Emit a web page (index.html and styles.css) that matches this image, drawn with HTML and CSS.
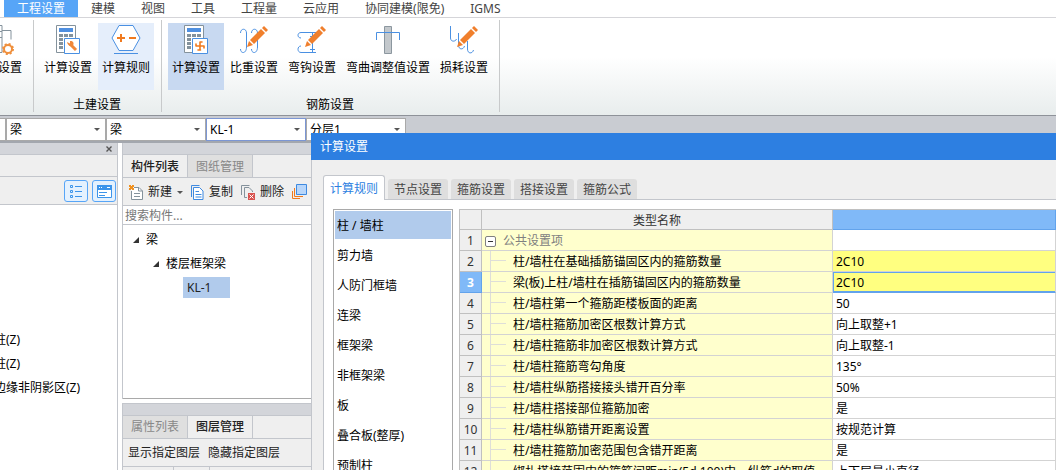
FILE: index.html
```html
<!DOCTYPE html>
<html lang="zh-CN">
<head>
<meta charset="utf-8">
<title>工程设置</title>
<link rel="stylesheet" href="styles.css">
</head>
<body>
<svg class="defs" aria-hidden="true">
  <symbol id="calc" viewBox="0 0 24 30">
    <path d="M8 27.500H.5V.5h19V13" fill="#fff" stroke="#84929c"/>
    <path d="M3 3h14v4H3z" fill="#4f8fe0"/>
    <path d="M3 9h4v3H3zM8 9h4v3H8zM13 9h4v3h-4zM3 13h4v3H3zM3 17h4v3H3zM3 21h4v3H3z" fill="#84929c"/>
    <path d="M8.500 13.500h15v15h-15z" fill="#fff" stroke="#4a90e2"/>
  </symbol>
  <symbol id="pencil" viewBox="0 0 22 22">
    <path d="M0 21l2-6 4 4z" fill="#f07f2c"/>
    <path d="M3 14L14 3l4 4L7 18z" fill="#f07f2c"/>
    <path d="M15 2l2-2 4 4-2 2z" fill="#f07f2c"/>
  </symbol>
</svg>
<div class="app">
  <nav class="menu">
    <a class="menu-item active" href="#">工程设置</a>
    <a class="menu-item" href="#">建模</a>
    <a class="menu-item" href="#">视图</a>
    <a class="menu-item" href="#">工具</a>
    <a class="menu-item" href="#">工程量</a>
    <a class="menu-item" href="#">云应用</a>
    <a class="menu-item" href="#">协同建模(限免)</a>
    <a class="menu-item" href="#">IGMS</a>
  </nav>

  <div class="ribbon">
    <section class="group cut">
      <div class="tools">
        <button class="tool">
          <svg width="48" height="30" viewBox="0 0 48 30"><path d="M15 .5h13v27H15M15 6.500h13M15 12.500h13M15 18.500h9M28 5.500h9v9" fill="none" stroke="#84929c"/><circle cx="34" cy="24" r="4" fill="#fff" stroke="#ef8f3c" stroke-width="2"/><circle cx="34" cy="24" r="5" fill="none" stroke="#ef8f3c" stroke-width="2" stroke-dasharray="2 1.927"/></svg>
          <span>设置</span>
        </button>
      </div>
    </section>
    <section class="group">
      <div class="tools">
        <button class="tool">
          <svg width="24" height="30"><use href="#calc"/><path d="M14 19l6 6" stroke="#f0883a" stroke-width="3"/><path d="M11 17l3 1.500V16c3-.5 4.500 2 3 4.500-2 2-5.500 0-6-3.500z" fill="#f0883a"/></svg>
          <span>计算设置</span>
        </button>
        <button class="tool hover">
          <svg width="30" height="30"><path d="M8 .5h14l7 12.500-7 12.500H8L1 13z" fill="#fff" stroke="#4a90e2"/><path d="M3 28.500h24" stroke="#4a90e2"/><path d="M6 13h8M10 9v8M18 13h7" stroke="#f07a1f" stroke-width="2"/></svg>
          <span>计算规则</span>
        </button>
      </div>
      <h2>土建设置</h2>
    </section>
    <section class="group">
      <div class="tools">
        <button class="tool pressed">
          <svg width="24" height="30"><use href="#calc"/><path d="M12 21h8M16 17v8M14 25h2.500M16 17h2M12 21v-2M20 21v2" fill="none" stroke="#f07a1f" stroke-width="1.600" stroke-linecap="round"/></svg>
          <span>计算设置</span>
        </button>
        <button class="tool">
          <svg width="30" height="30"><path d="M1.500 8c0-5 6-5 6 0v14c0 7-6 7-6 2M12.500 8c0-5 6-5 6 0v14c0 7-6 7-6 2" fill="none" stroke="#4a90e2"/><use href="#pencil" x="8" y="1" width="22" height="22"/></svg>
          <span>比重设置</span>
        </button>
        <button class="tool">
          <svg width="30" height="30"><path d="M4 13c-4 0-4-5.500 0-5.500h15M4 21c-4 0-4 6.500 0 6.500h15M15.500 7.500v20M13 11.500h5M13 24.500h5" fill="none" stroke="#4a90e2"/><use href="#pencil" x="8" y="1" width="22" height="22"/></svg>
          <span>弯钩设置</span>
        </button>
        <button class="tool">
          <svg width="26" height="30"><path d="M9.500 1.500h7v27h-7z" fill="#c3c8cc" stroke="#8c979f"/><path d="M1.500 15V7.500h23V15" fill="none" stroke="#4a90e2"/></svg>
          <span>弯曲调整值设置</span>
        </button>
        <button class="tool">
          <svg width="30" height="30"><path d="M1.500 1v12c0 4 5 4 6 1M9.500 8v12c0 5 5 5 6 1M18.500 16v8c0 5 5 5 6 1" fill="none" stroke="#4a90e2"/><use href="#pencil" x="8" y="1" width="22" height="22"/></svg>
          <span>损耗设置</span>
        </button>
      </div>
      <h2>钢筋设置</h2>
    </section>
  </div>

  <div class="selectors">
    <span class="box stub"></span>
    <label class="box"><select aria-label="构件类别"><option>梁</option></select></label>
    <label class="box"><select aria-label="构件类型"><option>梁</option></select></label>
    <label class="box focus"><select aria-label="构件"><option>KL-1</option></select></label>
    <label class="box"><select aria-label="分层"><option>分层1</option></select></label>
  </div>

  <main class="work">
    <aside class="nav-panel">
      <div class="cap"><button class="close" aria-label="关闭"><svg width="6" height="6"><path d="M.5.5l5 5M5.500.5l-5 5" stroke="#555" stroke-width="1.400"/></svg></button></div>
      <div class="strip"></div>
      <div class="view-bar">
        <button class="view" aria-label="列表"><svg width="12" height="13"><path d="M.5.5h2v2h-2zM.5 5.500h2v2h-2zM.5 10.500h2v2h-2zM5 1.500h7M5 6.500h7M5 11.500h7" fill="none" stroke="#3c94ea"/></svg></button>
        <button class="view" aria-label="详情"><svg width="15" height="13"><path d="M.5.5h14v12H.5z" fill="#fff" stroke="#3c94ea"/><path d="M0 0h15v5H0z" fill="#3c94ea"/><path d="M2 2.500h1M4 2.500h1M10 2.500h3" stroke="#fff"/><path d="M2 7.500h8M2 10.500h6" stroke="#3c94ea"/></svg></button>
      </div>
      <ul class="types">
        <li>柱(Z)</li>
        <li>柱(Z)</li>
        <li>边缘非阴影区(Z)</li>
      </ul>
    </aside>

    <div class="docks">
      <section class="dock">
        <div class="cap"></div>
        <div class="tabs">
          <button class="tab on">构件列表</button>
          <button class="tab">图纸管理</button>
        </div>
        <div class="bar">
          <button class="act"><svg width="14" height="15"><path d="M5 2.500h5l3.500 3.500v8.500h-11V6" fill="#fff" stroke="#84929c"/><path d="M9.500 2.500V6h4M5 8.500h6M5 11.500h6" fill="none" stroke="#84929c"/><path d="M0 0h2v1h1V0h2v2H4v1h1v2H3V4H2v1H0V3h1V2H0z" fill="#f0901e"/></svg>新建<i class="arrow"></i></button>
          <button class="act"><svg width="13" height="15"><path d="M.5 12V.5h8" fill="none" stroke="#3f8ae0"/><path d="M2.500 2.500h6l3.500 3.500v8.500H2.500z" fill="#fff" stroke="#3f8ae0"/><path d="M4.500 6.500H8M4.500 9.500h6M4.500 12h6" stroke="#3f8ae0"/></svg>复制</button>
          <button class="act"><svg width="14" height="15"><path d="M.5 10V.5h8M6 12.500H3.500v-10H8l3.500 3.500V7" fill="none" stroke="#84929c"/><path d="M7 8h7v7H7z" fill="#d9534f"/><path d="M8.500 9.500l4 4M12.500 9.500l-4 4" stroke="#fff"/></svg>删除</button>
          <button class="act" aria-label="层间复制"><svg width="15" height="16"><path d="M4.500.5h10v10h-10z" fill="#b8d6fa" stroke="#3f8ae0"/><path d="M2.500 4v8.500H11M.5 7v7.500H8" fill="none" stroke="#f07a1f"/></svg></button>
        </div>
        <input class="search" type="text" placeholder="搜索构件..." aria-label="搜索构件">
        <ul class="tree">
          <li class="lv1"><i class="tri"></i>梁</li>
          <li class="lv2"><i class="tri"></i>楼层框架梁</li>
          <li class="lv3"><span class="picked">KL-1</span></li>
        </ul>
      </section>
      <section class="dock low">
        <div class="cap"></div>
        <div class="tabs">
          <button class="tab">属性列表</button>
          <button class="tab on">图层管理</button>
        </div>
        <div class="bar layers">
          <button class="act">显示指定图层</button>
          <button class="act">隐藏指定图层</button>
        </div>
        <div class="cols"><span></span><span></span></div>
      </section>
    </div>
  </main>
</div>

<div class="dialog" role="dialog" aria-labelledby="dlg-title">
  <h1 id="dlg-title">计算设置</h1>
  <div class="dlg-body">
    <div class="dlg-tabs">
      <button class="dtab on">计算规则</button>
      <button class="dtab">节点设置</button>
      <button class="dtab">箍筋设置</button>
      <button class="dtab">搭接设置</button>
      <button class="dtab">箍筋公式</button>
    </div>
    <div class="page">
      <ul class="kinds">
        <li class="on">柱 / 墙柱</li>
        <li>剪力墙</li>
        <li>人防门框墙</li>
        <li>连梁</li>
        <li>框架梁</li>
        <li>非框架梁</li>
        <li>板</li>
        <li>叠合板(整厚)</li>
        <li>预制柱</li>
      </ul>
      <table class="grid">
        <colgroup><col class="c-num"><col class="c-name"><col></colgroup>
        <thead><tr><th></th><th>类型名称</th><th class="sel"></th></tr></thead>
        <tbody>
          <tr class="head"><th>1</th><td><button class="fold" aria-label="折叠"></button>公共设置项</td><td></td></tr>
          <tr class="mark"><th>2</th><td>柱/墙柱在基础插筋锚固区内的箍筋数量</td><td>2C10</td></tr>
          <tr class="mark current"><th>3</th><td>梁(板)上柱/墙柱在插筋锚固区内的箍筋数量</td><td>2C10</td></tr>
          <tr><th>4</th><td>柱/墙柱第一个箍筋距楼板面的距离</td><td>50</td></tr>
          <tr><th>5</th><td>柱/墙柱箍筋加密区根数计算方式</td><td>向上取整+1</td></tr>
          <tr><th>6</th><td>柱/墙柱箍筋非加密区根数计算方式</td><td>向上取整-1</td></tr>
          <tr><th>7</th><td>柱/墙柱箍筋弯勾角度</td><td>135°</td></tr>
          <tr><th>8</th><td>柱/墙柱纵筋搭接接头错开百分率</td><td>50%</td></tr>
          <tr><th>9</th><td>柱/墙柱搭接部位箍筋加密</td><td>是</td></tr>
          <tr><th>10</th><td>柱/墙柱纵筋错开距离设置</td><td>按规范计算</td></tr>
          <tr><th>11</th><td>柱/墙柱箍筋加密范围包含错开距离</td><td>是</td></tr>
          <tr><th>12</th><td>绑扎搭接范围内的箍筋间距min(5d,100)中，纵筋d的取值</td><td>上下层最小直径</td></tr>
        </tbody>
      </table>
    </div>
  </div>
</div>
</body>
</html>
```

FILE: styles.css
```css
* { box-sizing: border-box; }
html, body { height: 100%; margin: 0; overflow: hidden; }
body, button, input, select {
  font-family: "Noto Sans", "Noto Sans CJK SC", sans-serif;
  font-size: 12px;
  line-height: 18px;
  color: #000;
}
body { position: relative; }
button { border: 0; padding: 0; background: none; white-space: nowrap; }
ul { list-style: none; margin: 0; padding: 0; }
h1, h2 { margin: 0; font-size: 12px; font-weight: 400; }
svg { display: block; flex: none; }
.defs { position: absolute; width: 0; height: 0; }
.app { display: flex; flex-direction: column; height: 100%; }

.menu { display: flex; height: 18px; padding-left: 4px; border-bottom: 1px solid #d5d5d9; background: #fff; }
.menu-item { padding: 0 13px; color: #444; text-decoration: none; white-space: nowrap; }
.menu-item.active { background: #57a5f7; color: #fff; }

.ribbon {
  display: flex;
  height: 98px;
  padding: 2px 0 3px;
  border-bottom: 1px solid #8e9299;
  background: linear-gradient(#fff 40%, #e8eded);
}
.group { display: flex; flex-direction: column; justify-content: space-between; align-items: center; padding: 3px 7px 0 6px; border-right: 1px solid #c8cacb; }
.group.cut { width: 34px; align-items: flex-end; overflow: hidden; }
.cut .tool { align-items: flex-end; }
.tools { display: flex; gap: 2px; }
.tool { display: flex; flex-direction: column; align-items: center; gap: 4px; height: 67px; padding: 2px 4px 0; flex: none; }
.tool.hover { background: #e5eefb; }
.tool.pressed { background: #c8d9f1; }
.group h2 { line-height: 14px; }

.selectors { display: flex; height: 27px; padding: 2px 0; background: #c9ccd2; border-bottom: 2px solid #a3a7ae; }
.box { position: relative; flex: none; width: 100px; height: 23px; border: 1px solid #a9a9a9; background: #fff; }
.box.stub { width: 6px; border-left: 0; }
.box.focus { border-color: #7b96d4; }
.box select { width: 100%; height: 21px; padding: 0 3px; border: 0; background: none; appearance: none; }
.box:not(.stub)::after, .arrow { content: ""; border: 3px solid transparent; border-top-color: #555; border-bottom: 0; }
.box:not(.stub)::after { position: absolute; right: 5px; top: 9px; }

.work { display: flex; flex: 1; min-height: 0; gap: 4px; background: #fff; }
.cap { display: flex; justify-content: flex-end; align-items: center; height: 12px; flex: none; background: #d3d5da; border-bottom: 1px solid #c3c6cc; }
.nav-panel { width: 118px; flex: none; border-right: 1px solid #c3c6cc; overflow: hidden; }
.close { padding-right: 5px; }
.strip { height: 22px; background: #efefef; border-bottom: 1px solid #c3c6cc; }
.view-bar { display: flex; justify-content: flex-end; gap: 4px; height: 28px; padding: 3px 1px 2px; background: #efefef; border-bottom: 1px solid #c3c6cc; }
.view { display: flex; align-items: center; justify-content: center; width: 24px; height: 22px; border: 1px solid #57a5f7; border-radius: 3px; background: #e4f1fe; }
.types { margin: 123px 0 0 -6px; line-height: 24px; white-space: nowrap; }

.docks { display: flex; flex-direction: column; width: 190px; flex: none; gap: 4px; }
.dock { display: flex; flex-direction: column; flex: 1; border-left: 1px solid #c3c6cc; min-height: 0; }
.dock.low { flex: none; height: 67px; border-top: 1px solid #c3c6cc; }
.tabs { display: flex; height: 23px; flex: none; background: #efefef; border-bottom: 1px solid #c3c6cc; }
.tab { padding: 2px 8px 0; border-right: 1px solid #c3c6cc; background: #dfdfdf; color: #888; }
.tab.on { background: #efefef; color: #222; font-weight: 500; }
.low .tab { padding-top: 0; }
.bar { display: flex; align-items: center; gap: 8px; height: 28px; flex: none; padding: 1px 0 0 6px; background: #efefef; border-bottom: 1px solid #c3c6cc; overflow: hidden; }
.act { display: flex; align-items: center; gap: 5px; flex: none; color: #222; }
.layers { padding: 0 0 0 5px; }
.search { height: 19px; flex: none; width: 100%; padding: 0 2px; border: 0; border-bottom: 1px solid #c3c6cc; }
.search::placeholder { color: #777; }
.tree { flex: 1; padding-top: 3px; border-bottom: 1px solid #a9a9a9; line-height: 24px; }
.tree li { display: flex; align-items: center; }
.tri { margin-right: 7px; border-left: 6px solid transparent; border-bottom: 6px solid #333; }
.lv1 { padding-left: 10px; }
.lv2 { padding-left: 30px; }
.tree .lv3 { padding: 1px 0 0 60px; }
.picked { width: 47px; padding-left: 4px; line-height: 21px; background: #b1cbec; color: #222; }
.cols { display: flex; flex: 1; background: #efefef; }
.cols span { width: 51px; border-right: 1px solid #c3c6cc; }
.cols span + span { width: 36px; }

.dialog { position: absolute; top: 133px; left: 311px; right: 0; bottom: 0; display: flex; flex-direction: column; overflow: hidden; }
.dialog h1 { flex: none; padding: 0 9px; line-height: 27px; background: #2d7fe1; color: #fff; }
.dlg-body { display: flex; flex-direction: column; flex: 1; min-height: 0; padding: 15px 0 0 11px; border-left: 1px solid #c3c6cc; background: #efefef; }
.dlg-tabs { display: flex; align-items: flex-end; gap: 3px; height: 24px; }
.dtab { height: 20px; padding: 2px 6px 0; border-radius: 3px 3px 0 0; background: #dedede; color: #444; }
.dtab.on { position: relative; height: 25px; margin-bottom: -1px; border: 1px solid #c3c6cc; border-bottom: 0; background: #fff; color: #2d7fe1; }
.page { display: flex; flex: 1; min-height: 0; gap: 6px; padding: 9px 0 0 9px; border: solid #c3c6cc; border-width: 1px 0 0 1px; background: #fff; }
.kinds { width: 120px; flex: none; padding: 1px; border: 1px solid #a9a9a9; border-bottom: 0; line-height: 30px; overflow: hidden; }
.kinds li { padding-left: 2px; }
.kinds .on { height: 28px; margin-bottom: 2px; background: #b1cbec; }

.grid { flex: 1; align-self: flex-start; min-width: 0; table-layout: fixed; border-collapse: separate; border-spacing: 0; border: solid #c0c0c0; border-width: 1px 0 0 1px; }
.c-num { width: 22px; }
.c-name { width: 351px; }
.grid th, .grid td { height: 21px; padding: 2px 0 0; border: solid #d3d3d3; border-width: 0 1px 1px 0; line-height: 18px; font-weight: 400; white-space: nowrap; overflow: hidden; }
.grid thead th { height: 20px; line-height: 17px; }
.grid th { background: #efefef; border-color: #c0c0c0; color: #333; text-align: center; }
.grid td:last-child { padding-left: 3px; }
.grid td:nth-child(2) {
  padding-left: 31px;
  background:
    linear-gradient(#deded8, #deded8) 8px 0 / 1px 100% no-repeat,
    linear-gradient(#deded8, #deded8) 8px 9px / 16px 1px no-repeat,
    #ffffcd;
}
.grid thead .sel { background: #80b9f8; border-color: #62a3ec; }
.grid .head td:nth-child(2) { padding-left: 3px; background: #ffffcd; color: #808080; }
.fold { display: inline-block; width: 11px; height: 11px; margin-right: 7px; vertical-align: -1px; border: 1px solid #808080; border-radius: 2px; background: linear-gradient(#333, #333) center / 5px 1px no-repeat #fff; }
.grid .mark td:last-child { background: #ffff80; }
.grid .current th { background: #80b9f8; border-color: #62a3ec; color: #fff; font-weight: 700; }
.grid .current td:last-child { box-shadow: inset 1px 1px #62a3ec, inset 0 -1px #62a3ec; border-bottom-color: #62a3ec; }
```
